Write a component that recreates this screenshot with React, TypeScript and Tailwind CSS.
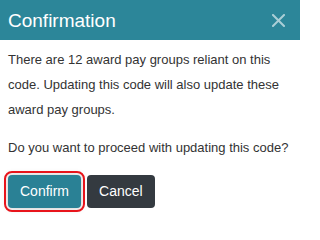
export default function App() {
  return (
    <div className="w-[300px] h-[219px] bg-white font-['Liberation_Sans',Arial,sans-serif] text-[#333]">
      {/* Header */}
      <div className="h-10 bg-[#2c8699] flex items-center justify-between pl-2 pr-[15px]">
        <h1 className="text-[19px] text-white leading-none">Confirmation</h1>
        <button className="text-white/60">
          <svg width="13" height="13" viewBox="0 0 13 13" fill="none">
            <path d="M1 1L12 12M12 1L1 12" stroke="currentColor" strokeWidth="2" strokeLinecap="square" />
          </svg>
        </button>
      </div>

      {/* Body */}
      <div className="px-2 pt-[7px] text-[13px] leading-[25px]">
        <p>There are 12 award pay groups reliant on this code. Updating this code will also update these award pay groups.</p>
        <p className="mt-[13px]">Do you want to proceed with updating this code?</p>

        <div className="flex gap-1.5 mt-[15px]">
          <button className="h-[33px] px-3 rounded bg-[#2a8195] text-white text-[14px] outline-2 outline-offset-2 outline-[#e8141b] shadow-[0_0_6px_rgba(0,0,0,0.25)]">
            Confirm
          </button>
          <button className="h-[33px] px-3 rounded bg-[#343a40] text-white text-[14px]">
            Cancel
          </button>
        </div>
      </div>
    </div>
  )
}
